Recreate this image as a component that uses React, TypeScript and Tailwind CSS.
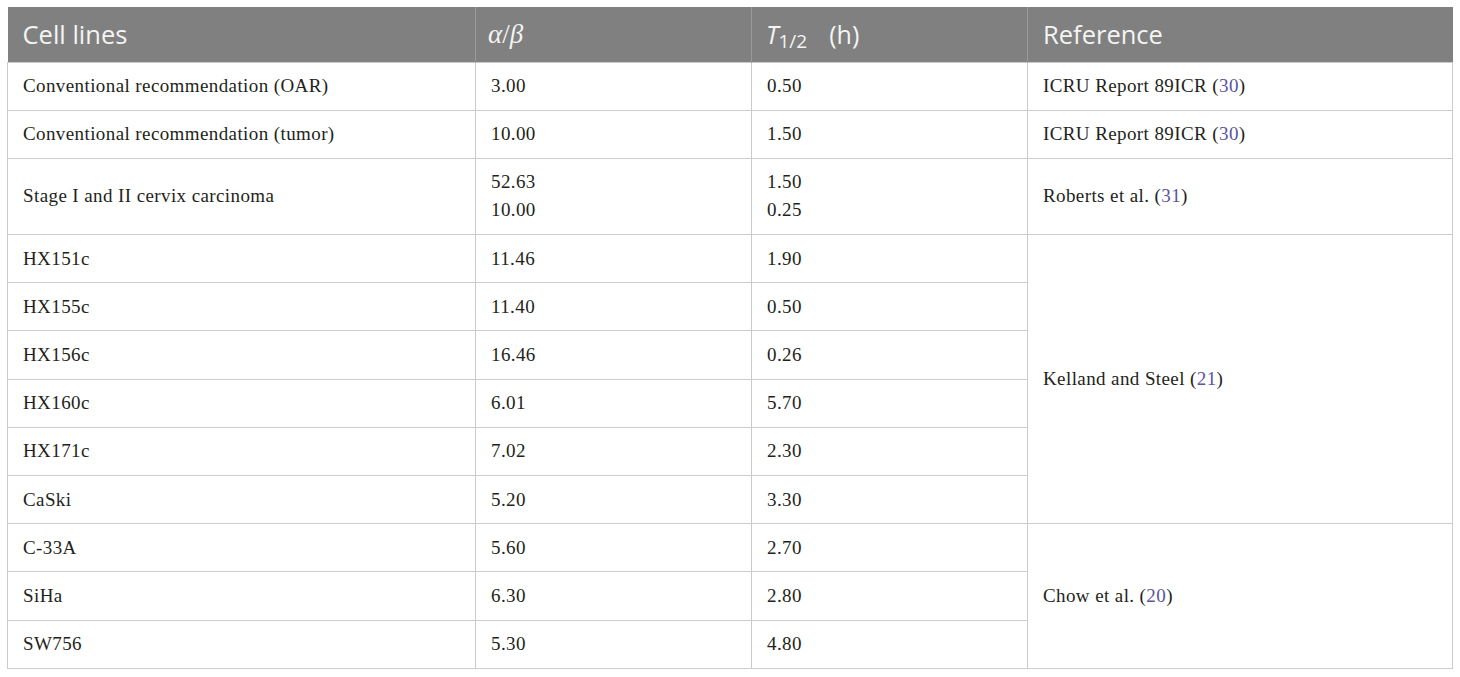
const rows: { name: string; ab: string[]; t: string[] }[] = [
  { name: "Conventional recommendation (OAR)", ab: ["3.00"], t: ["0.50"] },
  { name: "Conventional recommendation (tumor)", ab: ["10.00"], t: ["1.50"] },
  { name: "Stage I and II cervix carcinoma", ab: ["52.63", "10.00"], t: ["1.50", "0.25"] },
  { name: "HX151c", ab: ["11.46"], t: ["1.90"] },
  { name: "HX155c", ab: ["11.40"], t: ["0.50"] },
  { name: "HX156c", ab: ["16.46"], t: ["0.26"] },
  { name: "HX160c", ab: ["6.01"], t: ["5.70"] },
  { name: "HX171c", ab: ["7.02"], t: ["2.30"] },
  { name: "CaSki", ab: ["5.20"], t: ["3.30"] },
  { name: "C-33A", ab: ["5.60"], t: ["2.70"] },
  { name: "SiHa", ab: ["6.30"], t: ["2.80"] },
  { name: "SW756", ab: ["5.30"], t: ["4.80"] },
];

// reference cell: [label, cite, rowSpan] keyed by row index
const refs: Record<number, [string, string, number]> = {
  0: ["ICRU Report 89ICR", "30", 1],
  1: ["ICRU Report 89ICR", "30", 1],
  2: ["Roberts et al.", "31", 1],
  3: ["Kelland and Steel", "21", 6],
  9: ["Chow et al.", "20", 3],
};

const td = "border border-[#cbcbcb] px-[15px] py-[9.6px] align-middle";

export default function App() {
  return (
    <div className="bg-white min-h-screen pt-[7px] pl-[7px]">
      <table
        className="border-collapse table-fixed w-[1445px] text-[#231f20] text-[19px] leading-[28px] tracking-[0.4px]"
        style={{ fontFamily: '"Liberation Serif", "DejaVu Serif", serif' }}
      >
        <colgroup>
          <col className="w-[468px]" />
          <col className="w-[276px]" />
          <col className="w-[276px]" />
          <col className="w-[425px]" />
        </colgroup>
        <thead>
          <tr className="bg-[#7f807f] text-[#f4f4f4] h-[55px] text-left tracking-normal">
            <th className="font-normal px-[15px] text-[25.5px] border-r border-[#9a9a9a] font-['Open_Sans',sans-serif]">
              Cell lines
            </th>
            <th className="font-normal px-[12px] text-[27px] border-r border-[#9a9a9a]">
              <span className="italic font-['Liberation_Serif',serif]">α</span>
              <span className="font-['Liberation_Serif',serif]">/</span>
              <span className="italic font-['Liberation_Serif',serif]">β</span>
            </th>
            <th className="font-normal px-[14px] text-[25px] border-r border-[#9a9a9a] font-['Open_Sans',sans-serif]">
              <span className="italic">T</span>
              <sub className="text-[19px] relative top-[4px]">1/2</sub>
              <span className="ml-[22px]">(h)</span>
            </th>
            <th className="font-normal px-[15px] text-[25.5px] font-['Open_Sans',sans-serif]">
              Reference
            </th>
          </tr>
        </thead>
        <tbody>
          {rows.map((r, i) => {
            const ref = refs[i];
            return (
              <tr key={r.name}>
                <td className={td}>{r.name}</td>
                <td className={`${td} px-[12px]`}>
                  {r.ab.map((v) => (
                    <div key={v}>{v}</div>
                  ))}
                </td>
                <td className={td}>
                  {r.t.map((v) => (
                    <div key={v}>{v}</div>
                  ))}
                </td>
                {ref && (
                  <td className={td} rowSpan={ref[2]}>
                    {ref[0]} (<span className="text-[#5b53a0]">{ref[1]}</span>)
                  </td>
                )}
              </tr>
            );
          })}
        </tbody>
      </table>
    </div>
  );
}
